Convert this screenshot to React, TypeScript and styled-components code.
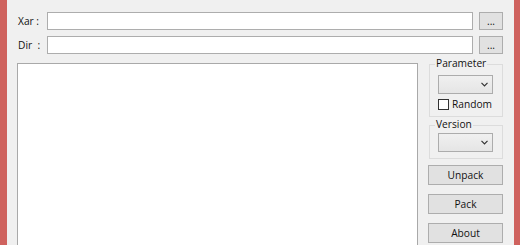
import React from "react";
import styled, { createGlobalStyle } from "styled-components";

const Global = createGlobalStyle`
  html, body { margin: 0; padding: 0; background: #f0f0f0; }
  body { font-family: "Open Sans", "Noto Sans", sans-serif; font-size: 10.2px; color: #000; }
`;

const Window = styled.div`
  display: flex;
  width: 520px;
  height: 245px;
  overflow: hidden;
`;

const Edge = styled.div<{ $w: number }>`
  width: ${(p) => p.$w}px;
  flex: none;
  background: #cf625e;
`;

const Content = styled.div`
  flex: 1;
  display: flex;
  flex-direction: column;
  padding: 12px 11px 0 0;
  background: #f0f0f0;
  min-width: 0;
`;

const PathRows = styled.div`
  display: flex;
  flex-direction: column;
  gap: 6px;
`;

const PathRow = styled.div`
  display: flex;
  align-items: center;
  height: 18px;
`;

const Label = styled.span`
  width: 29px;
  padding-left: 11px;
  flex: none;
  white-space: pre;
  line-height: 18px;
  color: #111;
`;

const TextBox = styled.div`
  flex: 1;
  height: 18px;
  box-sizing: border-box;
  background: #fff;
  border: 1px solid #adadad;
`;

const BrowseButton = styled.button`
  margin-left: 6px;
  width: 24px;
  height: 18px;
  box-sizing: border-box;
  flex: none;
  padding: 0;
  background: #e1e1e1;
  border: 1px solid #adadad;
  font: inherit;
  line-height: 16px;
  color: #111;
`;

const Main = styled.div`
  flex: 1;
  display: flex;
  margin-top: 9px;
  padding-left: 10px;
  min-height: 0;
`;

const Editor = styled.div`
  flex: 1;
  box-sizing: border-box;
  height: 200px;
  background: #fff;
  border: 1px solid #a9a9a9;
`;

const Side = styled.div`
  width: 75px;
  margin-left: 10px;
  display: flex;
  flex-direction: column;
  flex: none;
`;

const Group = styled.div<{ $top: number; $pt: number; $h: number }>`
  position: relative;
  margin: ${(p) => p.$top}px 0 0 1px;
  height: ${(p) => p.$h}px;
  box-sizing: border-box;
  border: 1px solid #dcdcdc;
  padding: ${(p) => p.$pt}px 0 0 8px;
  display: flex;
  flex-direction: column;
  gap: 4px;
`;

const Legend = styled.span`
  position: absolute;
  top: -9px;
  left: 5px;
  padding: 0 1px;
  background: #f0f0f0;
  line-height: 15px;
  color: #111;
`;

const Combo = styled.div`
  width: 55px;
  height: 19px;
  box-sizing: border-box;
  background: linear-gradient(#f0f0f0, #e5e5e5);
  border: 1px solid #acacac;
  display: flex;
  align-items: center;
  justify-content: flex-end;
  padding-right: 4px;
`;

const CheckRow = styled.label`
  display: flex;
  align-items: center;
  gap: 3px;
  height: 13px;
  line-height: 13px;
  color: #111;
`;

const CheckBox = styled.span`
  width: 11px;
  height: 11px;
  box-sizing: border-box;
  background: #fff;
  border: 1px solid #333;
`;

const Buttons = styled.div`
  display: flex;
  flex-direction: column;
  gap: 9px;
  margin-top: 6px;
`;

const ActionButton = styled.button`
  width: 75px;
  height: 20px;
  box-sizing: border-box;
  padding: 0;
  background: #e1e1e1;
  border: 1px solid #adadad;
  font: inherit;
  line-height: 18px;
  color: #111;
`;

const Arrow = () => (
  <svg width="7" height="5" viewBox="0 0 7 5">
    <path d="M0.5 0.8 L3.5 3.8 L6.5 0.8" fill="none" stroke="#333" strokeWidth="1.2" />
  </svg>
);

export default function App() {
  return (
    <>
      <Global />
      <Window>
        <Edge $w={7} />
        <Content>
          <PathRows>
            <PathRow>
              <Label>Xar :</Label>
              <TextBox />
              <BrowseButton>...</BrowseButton>
            </PathRow>
            <PathRow>
              <Label>Dir  :</Label>
              <TextBox />
              <BrowseButton>...</BrowseButton>
            </PathRow>
          </PathRows>
          <Main>
            <Editor />
            <Side>
              <Group $top={1} $pt={10} $h={53}>
                <Legend>Parameter</Legend>
                <Combo>
                  <Arrow />
                </Combo>
                <CheckRow>
                  <CheckBox />
                  Random
                </CheckRow>
              </Group>
              <Group $top={8} $pt={7} $h={34}>
                <Legend>Version</Legend>
                <Combo>
                  <Arrow />
                </Combo>
              </Group>
              <Buttons>
                <ActionButton>Unpack</ActionButton>
                <ActionButton>Pack</ActionButton>
                <ActionButton>About</ActionButton>
              </Buttons>
            </Side>
          </Main>
        </Content>
        <Edge $w={6} />
      </Window>
    </>
  );
}
